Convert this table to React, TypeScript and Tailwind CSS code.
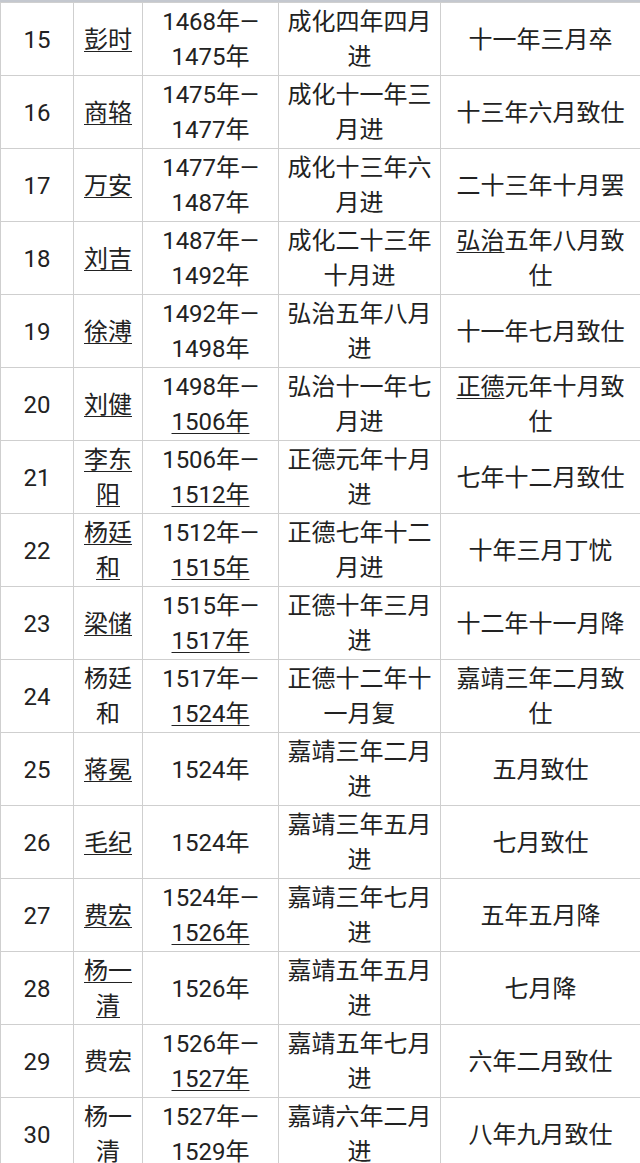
type Part = { t: string; u?: boolean };
type Row = {
    no: number;
    name: Part[];
    years: Part[];
    start: string;
    end: Part[];
};

const u = (t: string): Part => ({ t, u: true });
const p = (t: string): Part => ({ t });

// 明代内阁首辅（成化—嘉靖）
const rows: Row[] = [
    { no: 15, name: [u("彭时")], years: [p("1468年—1475年")], start: "成化四年四月进", end: [p("十一年三月卒")] },
    { no: 16, name: [u("商辂")], years: [p("1475年—1477年")], start: "成化十一年三月进", end: [p("十三年六月致仕")] },
    { no: 17, name: [u("万安")], years: [p("1477年—1487年")], start: "成化十三年六月进", end: [p("二十三年十月罢")] },
    { no: 18, name: [u("刘吉")], years: [p("1487年—1492年")], start: "成化二十三年十月进", end: [u("弘治"), p("五年八月致仕")] },
    { no: 19, name: [u("徐溥")], years: [p("1492年—1498年")], start: "弘治五年八月进", end: [p("十一年七月致仕")] },
    { no: 20, name: [u("刘健")], years: [p("1498年—"), u("1506年")], start: "弘治十一年七月进", end: [u("正德"), p("元年十月致仕")] },
    { no: 21, name: [u("李东阳")], years: [p("1506年—"), u("1512年")], start: "正德元年十月进", end: [p("七年十二月致仕")] },
    { no: 22, name: [u("杨廷和")], years: [p("1512年—"), u("1515年")], start: "正德七年十二月进", end: [p("十年三月丁忧")] },
    { no: 23, name: [u("梁储")], years: [p("1515年—"), u("1517年")], start: "正德十年三月进", end: [p("十二年十一月降")] },
    { no: 24, name: [p("杨廷和")], years: [p("1517年—"), u("1524年")], start: "正德十二年十一月复", end: [p("嘉靖三年二月致仕")] },
    { no: 25, name: [u("蒋冕")], years: [p("1524年")], start: "嘉靖三年二月进", end: [p("五月致仕")] },
    { no: 26, name: [u("毛纪")], years: [p("1524年")], start: "嘉靖三年五月进", end: [p("七月致仕")] },
    { no: 27, name: [u("费宏")], years: [p("1524年—"), u("1526年")], start: "嘉靖三年七月进", end: [p("五年五月降")] },
    { no: 28, name: [u("杨一清")], years: [p("1526年")], start: "嘉靖五年五月进", end: [p("七月降")] },
    { no: 29, name: [p("费宏")], years: [p("1526年—"), u("1527年")], start: "嘉靖五年七月进", end: [p("六年二月致仕")] },
    { no: 30, name: [p("杨一清")], years: [p("1527年—"), u("1529年")], start: "嘉靖六年二月进", end: [p("八年九月致仕")] },
];

function Parts({ parts }: { parts: Part[] }) {
    return (
        <>
            {parts.map((part, i) => (
                <span key={i} className={part.u ? "underline decoration-1 underline-offset-[3px]" : ""}>{part.t}</span>
            ))}
        </>
    );
}

const cell = "border border-[#cfcfcf] px-2 pt-[2px] pb-0 text-center align-middle";

export default function App() {
    return (
        <div className="w-[640px] h-[1163px] overflow-hidden bg-white text-[#222] text-[24px] leading-[35px] font-['Roboto','Noto_Sans_CJK_SC',sans-serif]">
            <div className="h-[2px] bg-[#c4c8cf]" />
            <table className="w-[640px] table-fixed border-collapse">
                <colgroup>
                    <col className="w-[73px]" />
                    <col className="w-[69px]" />
                    <col className="w-[136px]" />
                    <col className="w-[162px]" />
                    <col className="w-[200px]" />
                </colgroup>
                <tbody>
                    {rows.map((r) => (
                        <tr key={r.no}>
                            <td className={cell}>{r.no}</td>
                            <td className={`${cell} px-1`}><Parts parts={r.name} /></td>
                            <td className={cell}><Parts parts={r.years} /></td>
                            <td className={cell}>{r.start}</td>
                            <td className={cell}><Parts parts={r.end} /></td>
                        </tr>
                    ))}
                </tbody>
            </table>
        </div>
    );
}
